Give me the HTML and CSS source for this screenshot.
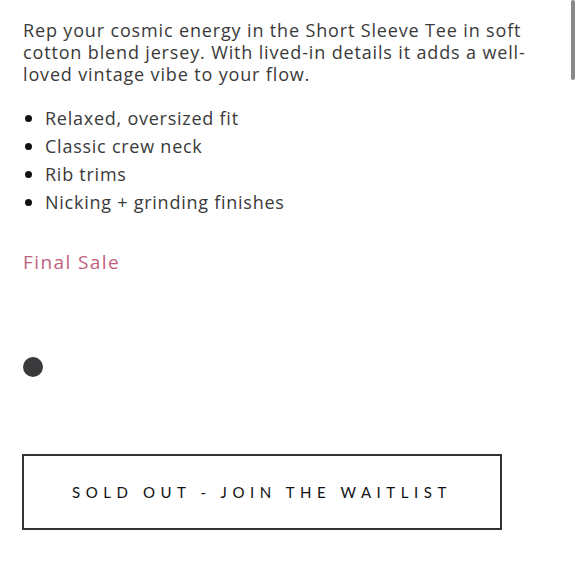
FILE: index.html
```html
<!DOCTYPE html>
<html>
<head>
<meta charset="utf-8">
<link rel="stylesheet" href="styles.css">
</head>
<body>
<main class="product">
  <p class="desc">Rep your cosmic energy in the Short Sleeve Tee in soft cotton blend jersey. With lived-in details it adds a well-loved vintage vibe to your flow.</p>
  <ul class="features">
    <li>Relaxed, oversized fit</li>
    <li>Classic crew neck</li>
    <li>Rib trims</li>
    <li>Nicking + grinding finishes</li>
  </ul>
  <p class="final">Final Sale</p>
  <div class="swatches"><span class="swatch"></span></div>
  <button class="waitlist">SOLD OUT - JOIN THE WAITLIST</button>
</main>
<div class="scrollbar"></div>
</body>
</html>
```
FILE: styles.css
```css
html, body {
  margin: 0;
  background: #fff;
}
body {
  font-family: "Open Sans", "Liberation Sans", sans-serif;
  color: #3a3a3a;
}
.product {
  padding: 19px 0 0 23px;
  width: 510px;
}
.desc {
  margin: 0;
  font-size: 18px;
  line-height: 22px;
  letter-spacing: 0.85px;
}
.features {
  margin: 19px 0 0;
  padding: 0 0 0 22px;
  font-size: 18px;
  line-height: 28px;
  letter-spacing: 0.75px;
}
.features li::marker {
  color: #111;
  font-size: 19px;
}
.final {
  margin: 32px 0 0;
  font-size: 19px;
  line-height: 28px;
  letter-spacing: 1.4px;
  color: #c3607f;
}
.swatches {
  margin-top: 81px;
  display: flex;
}
.swatch {
  width: 20px;
  height: 20px;
  border-radius: 50%;
  background: #3a3a3c;
}
.waitlist {
  margin-top: 77px;
  width: 480px;
  height: 76px;
  margin-left: -1px;
  border: 2px solid #333;
  background: #fff;
  color: #111;
  font-family: "Lato", "Liberation Sans", sans-serif;
  font-size: 15px;
  letter-spacing: 0.37em;
  padding: 0;
  font-weight: 400;
}
.scrollbar {
  position: fixed;
  top: 0;
  right: 5px;
  width: 4px;
  height: 80px;
  border-radius: 2px;
  background: #888;
}
```
